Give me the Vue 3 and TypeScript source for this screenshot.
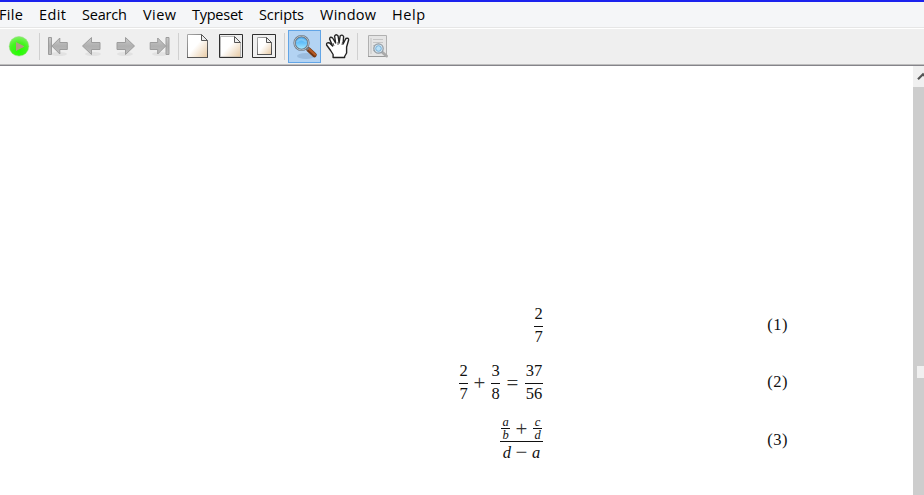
<script setup lang="ts">
interface MenuEntry { label: string; width: number }
const menus: MenuEntry[] = [
  { label: 'File', width: 24 },
  { label: 'Edit', width: 27 },
  { label: 'Search', width: 45 },
  { label: 'View', width: 33 },
  { label: 'Typeset', width: 51 },
  { label: 'Scripts', width: 45 },
  { label: 'Window', width: 56 },
  { label: 'Help', width: 33 },
]
</script>

<template>
  <div class="window">
    <div class="frame-edge"></div>
    <nav class="menubar">
      <svg v-for="m in menus" :key="m.label" class="menu" :width="m.width" height="24">
        <text x="0" y="18" :textLength="m.width" lengthAdjust="spacing">{{ m.label }}</text>
      </svg>
    </nav>
    <div class="toolbar">
      <svg width="39" height="33" viewBox="0 0 39 33">
        <defs>
          <radialGradient id="green" cx=".5" cy=".75" r=".8"><stop offset="0" stop-color="#20ff00" /><stop offset=".55" stop-color="#45f520" /><stop offset="1" stop-color="#8cf070" /></radialGradient>
          <linearGradient id="grey" x1="0" y1="0" x2="0" y2="1"><stop offset="0" stop-color="#c9c9c9" /><stop offset=".5" stop-color="#b0b0b0" /><stop offset="1" stop-color="#bdbdbd" /></linearGradient>
          <linearGradient id="paper" x1="0" y1="0" x2="1" y2="1"><stop offset=".45" stop-color="#fff" /><stop offset="1" stop-color="#e7c9a2" /></linearGradient>
          <linearGradient id="edge" x1="0" y1="0" x2="1" y2="1"><stop offset="0" stop-color="#aaa" /><stop offset="1" stop-color="#444" /></linearGradient>
          <linearGradient id="lens" x1="0" y1="0" x2="0" y2="1"><stop offset="0" stop-color="#4aa8ee" /><stop offset=".5" stop-color="#66c1fa" /><stop offset="1" stop-color="#b0efff" /></linearGradient>
        </defs>
        <circle cx="19" cy="16.300" r="9.800" fill="url(#green)" stroke="#8edb79" stroke-width=".5" />
        <path d="M16 12v9l8.600-4.500z" fill="#b29a84" />
      </svg>
      <i class="sep first"></i>
      <svg width="34" height="33" viewBox="0 0 34 33">
        <ellipse cx="18" cy="24" rx="8" ry="2" fill="#e2e2e2" />
        <g fill="url(#grey)" stroke="#9c9c9c"><path d="M7.500 7.500h3v17h-3z" /><path d="M10.800 16l8-8v4.500h7.500v7h-7.500v4.500z" /></g>
      </svg>
      <svg width="34" height="33" viewBox="0 0 34 33">
        <ellipse cx="18" cy="24" rx="8" ry="2" fill="#e2e2e2" />
        <path d="M7.500 16l9-8.500v5h8.500v7h-8.500v5z" fill="url(#grey)" stroke="#9c9c9c" />
      </svg>
      <svg width="34" height="33" viewBox="0 0 34 33">
        <ellipse cx="16" cy="24" rx="8" ry="2" fill="#e2e2e2" />
        <path d="M25.500 16l-9-8.500v5h-8.500v7h8.500v5z" fill="url(#grey)" stroke="#9c9c9c" />
      </svg>
      <svg width="34" height="33" viewBox="0 0 34 33">
        <ellipse cx="17" cy="24" rx="8" ry="2" fill="#e2e2e2" />
        <g fill="url(#grey)" stroke="#9c9c9c"><path d="M23 7.500h3v17h-3z" /><path d="M22.700 16l-8-8v4.500h-7.500v7h7.500v4.500z" /></g>
      </svg>
      <i class="sep"></i>
      <svg width="33" height="33" viewBox="0 0 33 33">
        <path d="M6.500 4.500h14l6 6v17h-20z" fill="url(#paper)" stroke="url(#edge)" />
        <path d="M20.500 4.500v6h6z" fill="#eee" stroke="#555" stroke-linejoin="round" /><path d="M6 27.500h21" stroke="#555" />
      </svg>
      <svg width="33" height="33" viewBox="0 0 33 33">
        <path d="M5.500 4.500h23v23h-23z" fill="#eee" stroke="#303030" />
        <path d="M6.500 6.500h14l6 6v14.500h-20z" fill="url(#paper)" stroke="#aaa" stroke-width=".8" />
        <path d="M20.500 6.500v6h6z" fill="#eee" stroke="#555" stroke-linejoin="round" /><path d="M6 27.500h22" stroke="#303030" />
      </svg>
      <svg width="33" height="33" viewBox="0 0 33 33">
        <path d="M5.500 4.500h23v23h-23z" fill="#f0f0f0" stroke="#303030" />
        <path d="M10.500 7.500h9l5 5v12h-14z" fill="url(#paper)" stroke="url(#edge)" />
        <path d="M19.500 7.500v5h5z" fill="#eee" stroke="#555" stroke-linejoin="round" /><path d="M10 24.500h15" stroke="#555" />
      </svg>
      <i class="sep zoom-sep"></i>
      <div class="active-tool">
        <svg width="31" height="31" viewBox="0 0 31 31">
          <ellipse cx="17" cy="25" rx="9" ry="3" fill="#8baed1" opacity=".6" />
          <path d="M19.500 18.500l6 5.500" stroke="#743713" stroke-width="4.500" stroke-linecap="round" />
          <path d="M20 18l6 5.500" stroke="#b65b26" stroke-width="2.300" stroke-linecap="round" />
          <path d="M17 16l2.500 2.500" stroke="#777" stroke-width="3" />
          <circle cx="12.500" cy="12" r="6.900" fill="url(#lens)" stroke="#697887" stroke-width="2.400" />
          <circle cx="12.500" cy="12" r="7" fill="none" stroke="#b5bdc2" stroke-width="1" />
          <path d="M8 11q4-5 9 0" fill="none" stroke="#7dc8f7" stroke-width="2" />
        </svg>
      </div>
      <svg width="33" height="33" viewBox="0 0 33 33">
        <path d="M11.500 27.500v-3l-2.500-4-4-5.500q-.5-3 3-2l3 3-3-7q.5-3 3-1l3 5-1-7q1.500-2.500 3.500 0l1 7 1-7q2-2 3.500.5l-.5 7.500 2.800-5.500q3-1 2.700 1.500l-2 7v6l-2 3.500v1z" transform="translate(.6)" fill="#fff" stroke="#222" stroke-width="1.400" stroke-linejoin="round" />
        <path d="M12 13l1 3M17 12v3M21.500 12l-.5 3" stroke="#555" fill="none" />
      </svg>
      <i class="sep last-sep"></i>
      <svg width="33" height="33" viewBox="0 0 33 33">
        <path d="M7.500 5.500h18v21h-18z" fill="#e5e5e5" stroke="#b0b0b0" />
        <path d="M12 9.500h10M12 12.500h10M12 15.500h3M12 20.500h2M10 8v16" stroke="#c5c5c5" />
        <path d="M7 26.500h19" stroke="#999" />
        <path d="M21 22l4.500 4" stroke="#aaa" stroke-width="3" stroke-linecap="round" />
        <circle cx="17.500" cy="18.500" r="4.700" fill="#d9e8f1" stroke="#909ba4" stroke-width="1.200" />
        <circle cx="17.500" cy="18.500" r="2.800" fill="#b9e1f8" stroke="#75aed8" />
      </svg>
    </div>
    <div class="viewer">
      <main class="paper">
        <div class="equation">
          <div class="math"><span class="frac"><span>2</span><span>7</span></span></div>
          <span class="number">(1)</span>
        </div>
        <div class="equation">
          <div class="math">
            <span class="frac"><span>2</span><span>7</span></span><span class="op plus">+</span>
            <span class="frac"><span>3</span><span>8</span></span><span class="op equals">=</span>
            <span class="frac wide"><span>37</span><span>56</span></span>
          </div>
          <span class="number">(2)</span>
        </div>
        <div class="equation">
          <div class="math">
            <span class="compound">
              <span class="upper"><span class="small"><i>a</i><i>b</i></span><span class="op">+</span><span class="small"><i>c</i><i>d</i></span></span>
              <span class="lower"><i>d</i><span class="op">−</span><i>a</i></span>
            </span>
          </div>
          <span class="number">(3)</span>
        </div>
      </main>
      <aside class="scrollbar">
        <div class="scroll-up"><svg width="11" height="21" viewBox="0 0 11 21"><path d="M5 13.300l5-5 5 5" fill="none" stroke="#555" stroke-width="2.200" /></svg></div>
        <div class="thumb"></div>
      </aside>
    </div>
  </div>
</template>

<style>
body { overflow: hidden; background: #fff; }
</style>
<style scoped>
.window { width: 924px; height: 495px; overflow: hidden; display: flex; flex-direction: column; background: #fff; }
.frame-edge { height: 2px; background: #1b22ee; flex: none; }
.menubar { box-sizing: border-box; height: 27px; flex: none; display: flex; gap: 16px; background: #f5f6f8; border-bottom: 1px solid #fff; box-shadow: inset 0 -1px #e6e6e6; }
.menu { overflow: visible; flex: none; font: 14.500px "Open Sans", "Noto Sans", sans-serif; fill: #000; }
.menu:first-child { margin-left: -1px; }
.toolbar { box-sizing: border-box; height: 37px; flex: none; display: flex; background: #efefef; padding-top: 1px; border-bottom: 1px solid #85848a; box-shadow: inset 0 -1px #bdbdbd; }
.toolbar > * { flex: none; }
.sep { width: 1px; height: 27px; margin: 3px 2px 0 1px; background: #d0d0d0; }
.first { margin: 3px 1px 0 0; }
.zoom-sep { margin: 3px 3px 0 4px; }
.last-sep { margin: 3px 3px 0 3px; }
.active-tool { box-sizing: border-box; width: 33px; height: 33px; border: 1px solid #62a5e6; background: #b3d3f3; }
.active-tool svg { display: block; }
.viewer { flex: 1; display: flex; min-height: 0; }
.paper { box-sizing: border-box; flex: 1; padding-top: 236px; font: 16.500px "Liberation Serif", serif; color: #111; }
.equation { height: 57px; display: grid; grid-template-columns: 543px 245px; align-items: start; }
.equation:nth-child(2) { height: 58px; }
.math { display: flex; justify-content: flex-end; height: 48px; align-items: center; }
.number { text-align: right; line-height: 46px; letter-spacing: .5px; }
.frac { width: 9px; text-align: center; display: flex; flex-direction: column; }
.frac > span:first-child { box-sizing: border-box; height: 25px; border-bottom: 1px solid #111; line-height: 24px; }
.frac > span:last-child { height: 23px; line-height: 20px; }
.wide { width: 18px; }
.op { width: 23px; text-align: center; font-size: 21px; line-height: 19px; color: #333; }
.equals { width: 25px; }
.compound { width: 43px; display: flex; flex-direction: column; }
.upper { box-sizing: border-box; height: 25px; display: flex; justify-content: center; align-items: center; border-bottom: 1px solid #111; }
.small { width: 9px; font-size: 12.500px; display: flex; flex-direction: column; text-align: center; }
.small i { height: 11px; }
.small i:first-child { box-sizing: border-box; border-bottom: 1px solid #111; line-height: 9px; }
.small i:last-child { line-height: 12px; }
.lower { height: 21px; margin-bottom: 2px; display: flex; justify-content: center; align-items: center; line-height: 20px; }
.lower .op { width: 21px; }
.scrollbar { width: 11px; background: #cdcdcd; display: flex; flex-direction: column; }
.scroll-up { height: 21px; background: #f0f0f0; }
.scroll-up svg { display: block; }
.thumb { width: 7px; height: 12px; margin: 279px 0 0 4px; background: #f0f0f0; }
</style>
